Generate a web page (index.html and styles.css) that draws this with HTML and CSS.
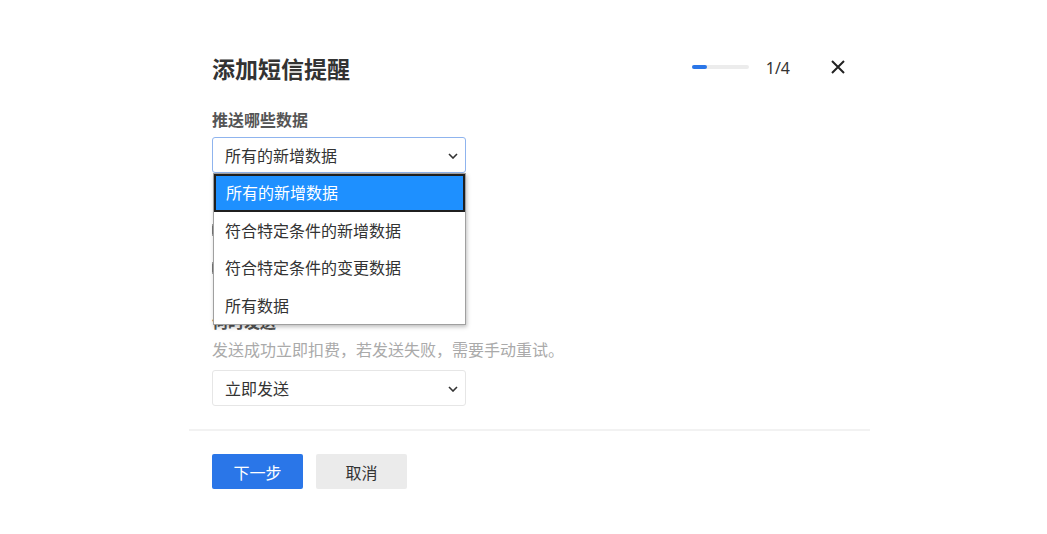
FILE: index.html
```html
<!DOCTYPE html>
<html lang="zh-CN">
<head>
  <meta charset="UTF-8" />
  <meta name="viewport" content="width=device-width, initial-scale=1.0" />
  <title>添加短信提醒</title>
  <link rel="stylesheet" href="styles.css">
</head>
<body>
  <div class="dialog">
    <div class="dialog-body">
      <div class="header">
        <h2 class="title">添加短信提醒</h2>
        <div class="progress"><span class="progress-fill"></span></div>
        <span class="step">1/4</span>
        <button class="close" type="button" aria-label="关闭">
          <svg width="16" height="16" viewBox="0 0 16 16"><path d="M2 2L14 14M14 2L2 14" stroke="#222" stroke-width="2" fill="none"/></svg>
        </button>
      </div>

      <div class="field">
        <div class="label">推送哪些数据</div>
        <div class="select-wrap">
          <div class="select focused">
            <span>所有的新增数据</span>
            <svg class="chevron" width="10" height="6" viewBox="0 0 10 6"><path d="M1 1L5 5L9 1" stroke="#333" stroke-width="1.6" fill="none"/></svg>
          </div>
          <ul class="menu">
            <li class="active">所有的新增数据</li>
            <li>符合特定条件的新增数据</li>
            <li>符合特定条件的变更数据</li>
            <li>所有数据</li>
          </ul>
        </div>
      </div>

      <!-- covered by the open menu, only the checkbox edges show -->
      <div class="field field-hidden">
        <div class="label-space"></div>
        <div class="check"><input type="checkbox" aria-label="表单提交者" /></div>
        <div class="check"><input type="checkbox" aria-label="指定手机号" /></div>
      </div>

      <div class="field">
        <div class="label">何时发送</div>
        <div class="hint">发送成功立即扣费，若发送失败，需要手动重试。</div>
        <div class="select">
          <span>立即发送</span>
          <svg class="chevron" width="10" height="6" viewBox="0 0 10 6"><path d="M1 1L5 5L9 1" stroke="#333" stroke-width="1.6" fill="none"/></svg>
        </div>
      </div>
    </div>

    <div class="footer">
      <button class="btn btn-primary" type="button">下一步</button>
      <button class="btn btn-default" type="button">取消</button>
    </div>
  </div>
</body>
</html>
```

FILE: styles.css
```css
body {
  margin: 0;
  background: #fff;
  font-family: "Noto Sans CJK SC", "Noto Sans", sans-serif;
  color: #333;
}
.dialog {
  width: 681px;
  padding-top: 52px;
  margin-left: 189px;
}
.dialog-body {
  padding: 0 23px 23px;
  border-bottom: 2px solid #f2f2f2;
}
.header {
  display: flex;
  align-items: center;
  height: 32px;
}
.title {
  flex: 1;
  margin: 0;
  font-size: 23px;
  font-weight: 700;
  color: #333;
  line-height: 32px;
}
.progress {
  width: 57px;
  height: 4px;
  background: #ececec;
  border-radius: 2px;
  margin-right: 17px;
  margin-top: -2px;
}
.progress-fill {
  display: block;
  width: 15px;
  height: 4px;
  background: #2a76e8;
  border-radius: 2px;
}
.step {
  font-family: "Noto Sans", sans-serif;
  font-size: 16px;
  color: #333;
  margin-right: 40px;
  margin-top: -1px;
}
.close {
  border: none;
  background: none;
  padding: 0;
  width: 16px;
  height: 16px;
  margin-right: 1px;
  margin-top: -2px;
  cursor: pointer;
}
.field {
  margin-top: 25px;
}
.field + .field {
  margin-top: 20px;
}
.field-hidden + .field {
  margin-top: 24px;
}
.label {
  font-size: 16px;
  font-weight: 700;
  color: #555;
  line-height: 20px;
  margin-bottom: 8px;
}
.label-space {
  height: 18px;
}
.hint {
  font-size: 16px;
  color: #aaa;
  line-height: 20px;
  margin-top: 0;
  margin-bottom: 11px;
}
.select-wrap {
  position: relative;
  width: 254px;
}
.select {
  box-sizing: border-box;
  width: 254px;
  height: 36px;
  display: flex;
  align-items: center;
  justify-content: space-between;
  padding: 0 7px 0 12px;
  border: 1px solid #e6e6e6;
  border-radius: 3px;
  font-size: 16px;
  color: #333;
  background: #fff;
}
.select.focused {
  border-color: #8fb4ee;
}
.chevron {
  margin-top: 1px;
}
.menu {
  position: absolute;
  top: 36px;
  left: 1px;
  width: 253px;
  box-sizing: border-box;
  margin: 0;
  padding: 0;
  list-style: none;
  background: #fff;
  border: 1px solid #a0a0a0;
  box-shadow: 1px 2px 4px rgba(0, 0, 0, 0.25);
  z-index: 2;
}
.menu li {
  height: 37.5px;
  line-height: 37px;
  padding-left: 11px;
  font-size: 16px;
  color: #333;
}
.menu li.active {
  background: #1e90ff;
  color: #fff;
  border: 2px solid #1f1f1f;
  box-sizing: border-box;
  line-height: 32px;
  padding-left: 10px;
}
.check {
  display: flex;
  align-items: center;
  height: 38px;
}
.check input {
  margin: 0;
  width: 14px;
  height: 14px;
}
.footer {
  display: flex;
  gap: 13px;
  padding: 23px 23px;
}
.btn {
  width: 91px;
  height: 35px;
  border: none;
  border-radius: 2px;
  font-family: "Noto Sans CJK SC", sans-serif;
  font-size: 16px;
  cursor: pointer;
}
.btn-primary {
  background: #2a76e8;
  color: #fff;
}
.btn-default {
  background: #ebebeb;
  color: #333;
}
```
